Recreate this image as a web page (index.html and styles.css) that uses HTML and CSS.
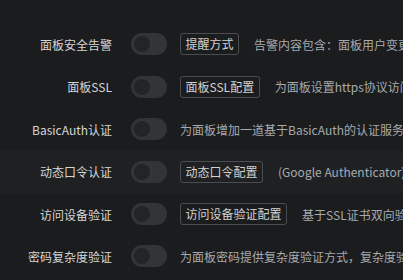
FILE: index.html
```html
<!DOCTYPE html>
<html lang="zh-CN">
<head>
  <meta charset="UTF-8">
  <meta name="viewport" content="width=device-width, initial-scale=1.0">
  <title>面板安全设置</title>
  <link rel="stylesheet" href="styles.css">
</head>
<body>
  <div class="settings">
    <div class="row">
      <span class="label">面板安全告警</span>
      <span class="switch"><span class="knob"></span></span>
      <button class="btn">提醒方式</button>
      <span class="desc">告警内容包含：面板用户变更、面板日志删除、面板开启开发者模式</span>
    </div>
    <div class="row">
      <span class="label">面板SSL</span>
      <span class="switch"><span class="knob"></span></span>
      <button class="btn">面板SSL配置</button>
      <span class="desc">为面板设置https协议访问，提高面板访问安全性</span>
    </div>
    <div class="row">
      <span class="label">BasicAuth认证</span>
      <span class="switch"><span class="knob"></span></span>
      <span class="desc">为面板增加一道基于BasicAuth的认证服务，有效防止面板被扫描发现</span>
    </div>
    <div class="row hover">
      <span class="label">动态口令认证</span>
      <span class="switch"><span class="knob"></span></span>
      <button class="btn">动态口令配置</button>
      <span class="desc">(Google Authenticator)动态口令认证，登录面板时需输入动态口令</span>
    </div>
    <div class="row">
      <span class="label">访问设备验证</span>
      <span class="switch"><span class="knob"></span></span>
      <button class="btn">访问设备验证配置</button>
      <span class="desc">基于SSL证书双向验证，只有安装了证书的设备才能访问面板</span>
    </div>
    <div class="row">
      <span class="label">密码复杂度验证</span>
      <span class="switch"><span class="knob"></span></span>
      <span class="desc">为面板密码提供复杂度验证方式，复杂度验证开启后将强制要求</span>
    </div>
  </div>
</body>
</html>
```

FILE: styles.css
```css
body {
  margin: 0;
  background: #1b1c1e;
  font-family: "Noto Sans CJK SC", "Open Sans", sans-serif;
  font-size: 12px;
  overflow: hidden;
}
.settings {
  padding-top: 23.3px;
}
.row {
  display: flex;
  align-items: center;
  height: 42.4px;
  white-space: nowrap;
}
.row.hover {
  background: #1f2022;
}
.label {
  flex: none;
  width: 112px;
  margin-right: 19px;
  text-align: right;
  color: #d6d6d6;
}
.switch {
  flex: none;
  display: flex;
  align-items: center;
  width: 36px;
  height: 22px;
  margin-right: 13px;
  border-radius: 11px;
  background: #323538;
}
.knob {
  width: 16px;
  height: 16px;
  margin-left: 3px;
  border-radius: 50%;
  background: #222426;
}
.btn {
  flex: none;
  height: 22px;
  margin-right: 15px;
  padding: 0 4.5px;
  border: 1px solid #4a4d51;
  border-radius: 3px;
  background: transparent;
  color: #d2d2d2;
  font-family: inherit;
  font-size: 12px;
  line-height: 20px;
}
.desc {
  color: #a6aaae;
}
```
